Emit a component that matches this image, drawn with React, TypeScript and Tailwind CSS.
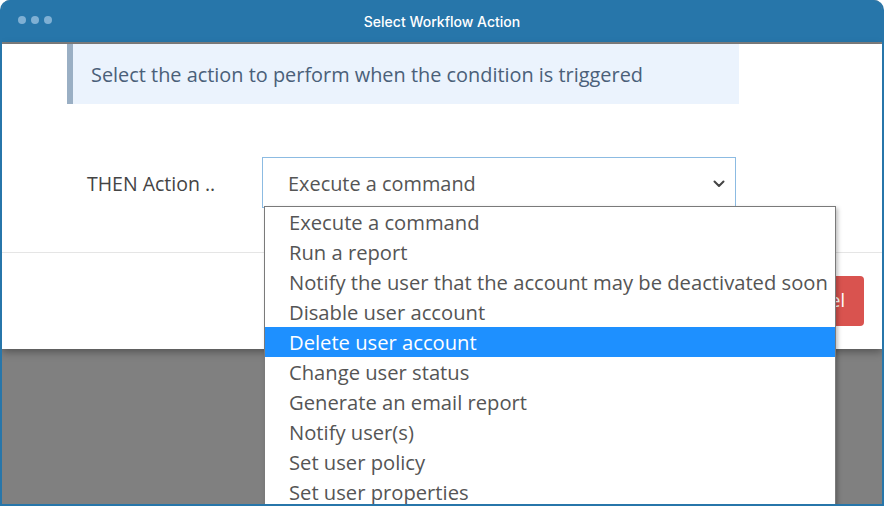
const OPTIONS = [
  "Execute a command",
  "Run a report",
  "Notify the user that the account may be deactivated soon",
  "Disable user account",
  "Delete user account",
  "Change user status",
  "Generate an email report",
  "Notify user(s)",
  "Set user policy",
  "Set user properties",
];

const SELECTED = "Delete user account";

function TitleBar() {
  return (
    <div className="relative flex h-[42px] items-center justify-center bg-[#2776aa]">
      <div className="absolute left-[16px] top-[16px] flex gap-[5px]">
        <span className="h-[8px] w-[8px] rounded-full bg-[#7fb0d4]" />
        <span className="h-[8px] w-[8px] rounded-full bg-[#7fb0d4]" />
        <span className="h-[8px] w-[8px] rounded-full bg-[#7fb0d4]" />
      </div>
      <p className="text-[14px] font-medium text-white [font-family:Inter,'Noto_Sans',sans-serif]">
        Select Workflow Action
      </p>
    </div>
  );
}

function Chevron() {
  return (
    <svg width="12" height="8" viewBox="0 0 12 8" fill="none">
      <path d="M1.5 1.5 L6 6 L10.5 1.5" stroke="#444" strokeWidth="2" strokeLinecap="round" strokeLinejoin="round" />
    </svg>
  );
}

function Dropdown() {
  return (
    <ul className="absolute left-[262px] top-[164px] w-[572px] border border-[#7a7a7a] bg-white pb-[20px] text-[20.2px] shadow-[2px_2px_4px_rgba(0,0,0,0.25)]">
      {OPTIONS.map((o) => {
        const on = o === SELECTED;
        return (
          <li
            key={o}
            className={`flex h-[30px] items-center whitespace-nowrap pl-[24px] leading-[28px] ${on ? "bg-[#1e90ff] text-white" : "text-[#555]"}`}
          >
            {o}
          </li>
        );
      })}
    </ul>
  );
}

export default function App() {
  return (
    <div className="h-[506px] w-[884px] overflow-hidden bg-white">
      <div className="flex h-full flex-col overflow-hidden rounded-t-[10px] border-x-2 border-b-2 border-[#2776aa] bg-[#808080]">
        <TitleBar />
        <div className="relative flex-1 [font-family:'Open_Sans','Noto_Sans',sans-serif]">
          <div className="h-[305px] bg-white shadow-[0_3px_8px_rgba(0,0,0,0.35)]">
            <div className="ml-[65px] mt-[2px] flex h-[60px] w-[672px] items-center border-l-[6px] border-[#9aafc4] bg-[#ebf3fd] pl-[18px] pt-[2px]">
              <p className="whitespace-nowrap text-[19.9px] text-[#4a6079]">
                Select the action to perform when the condition is triggered
              </p>
            </div>
            <div className="mt-[52px] flex items-center pt-[1px]">
              <p className="w-[260px] whitespace-nowrap pl-[85px] pt-[2px] text-[19.5px] text-[#444]">THEN Action ..</p>
              <div className="flex h-[51px] w-[474px] items-center justify-between border border-[#8cbbe2] pl-[25px] pr-[10px] pt-[2px] text-[19.9px] text-[#555]">
                <span>Execute a command</span>
                <Chevron />
              </div>
            </div>
            <div className="mt-[44px] flex h-[96px] items-center justify-end border-t border-[#e5e5e5] pr-[18px]">
              <button className="flex h-[50px] w-[80px] items-center justify-end rounded-[4px] bg-[#d9534f] pr-[19px] text-[18px] text-white">
                Cancel
              </button>
            </div>
          </div>
          <Dropdown />
        </div>
      </div>
    </div>
  );
}
